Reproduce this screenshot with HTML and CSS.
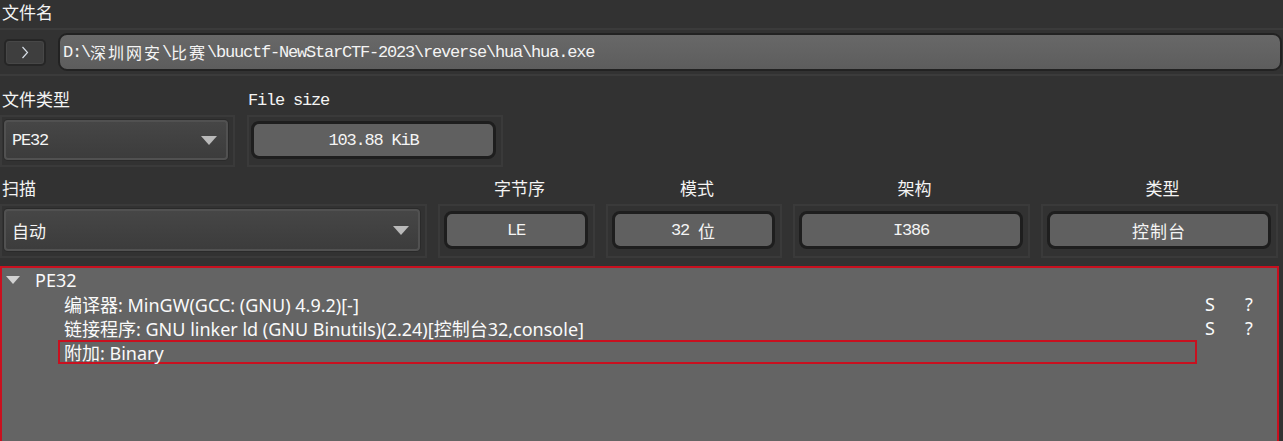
FILE: index.html
```html
<!DOCTYPE html>
<html lang="zh-CN">
<head>
<meta charset="utf-8">
<title>Detect It Easy</title>
<link rel="stylesheet" href="styles.css">
</head>
<body>
<div class="app">
  <div class="lbl top">文件名</div>
  <div class="pathrow">
    <div class="go"><svg width="8" height="13" viewBox="0 0 8 13"><polyline points="1.5,1 6.5,6.5 1.5,12" fill="none" stroke="#d6dde6" stroke-width="1.2"/></svg></div>
    <div class="path">D:\<span class="cj">深圳网安</span>\<span class="cj">比赛</span>\buuctf-NewStarCTF-2023\reverse\hua\hua.exe</div>
  </div>

  <div class="row2">
    <div class="col c-type">
      <div class="lbl">文件类型</div>
      <div class="frame f2"><div class="combo"><span>PE32</span><i class="arrow"></i></div></div>
    </div>
    <div class="col c-size">
      <div class="lbl mono">File size</div>
      <div class="frame f2"><div class="btn">103.88 KiB</div></div>
    </div>
  </div>

  <div class="row3">
    <div class="col">
      <div class="lbl">扫描</div>
      <div class="frame f3"><div class="combo"><span class="cj">自动</span><i class="arrow"></i></div></div>
    </div>
    <div class="col">
      <div class="lbl ctr">字节序</div>
      <div class="frame f3"><div class="btn">LE</div></div>
    </div>
    <div class="col">
      <div class="lbl ctr">模式</div>
      <div class="frame f3"><div class="btn">32 <span class="cj">位</span></div></div>
    </div>
    <div class="col">
      <div class="lbl ctr">架构</div>
      <div class="frame f3"><div class="btn">I386</div></div>
    </div>
    <div class="col">
      <div class="lbl ctr">类型</div>
      <div class="frame f3"><div class="btn"><span class="cj">控制台</span></div></div>
    </div>
  </div>

  <div class="tree">
    <div class="node"><i class="tw"></i><span class="root">PE32</span></div>
    <div class="leaf"><div class="name">编译器: MinGW(GCC: (GNU) 4.9.2)[-]</div><div class="s">S</div><div class="q">?</div></div>
    <div class="leaf"><div class="name">链接程序: GNU linker ld (GNU Binutils)(2.24)[控制台32,console]</div><div class="s">S</div><div class="q">?</div></div>
    <div class="leaf sel"><div class="name">附加: Binary</div><div class="s"></div><div class="q"></div></div>
  </div>
</div>
</body>
</html>
```

FILE: styles.css
```css
html, body {
  margin: 0;
  padding: 0;
}

body {
  background: #323232;
  width: 1283px;
  height: 441px;
  overflow: hidden;
  color: #f4f4f4;
  font-family: "Liberation Mono", "Noto Sans CJK SC", monospace;
}

.app {
  display: flex;
  flex-direction: column;
}

.lbl {
  height: 22px;
  line-height: 22px;
  font-size: 17px;
  font-family: "Noto Sans CJK SC", sans-serif;
  padding-left: 2px;
  margin-bottom: 5px;
  white-space: nowrap;
}

.lbl.top {
  height: 28px;
  line-height: 24px;
  margin-bottom: 0;
}

.lbl.mono {
  font-family: "Liberation Mono", monospace;
  font-size: 17px;
  letter-spacing: -1.2px;
  padding-left: 1px;
  line-height: 25px;
}

.lbl.ctr {
  text-align: center;
  padding-left: 6px;
}

.cj {
  font-family: "Noto Sans CJK SC", sans-serif;
  letter-spacing: 1px;
}

/* path row */
.pathrow {
  display: flex;
  align-items: center;
  gap: 12px;
  height: 44px;
  border-top: 2px solid #3b3b3b;
  border-bottom: 2px solid #3b3b3b;
  padding-left: 4px;
}

.go {
  width: 42px;
  height: 27px;
  box-sizing: border-box;
  border: 2px solid #262626;
  border-radius: 5px;
  background: #3e3e3e;
  box-shadow: inset 0 0 0 1px #474747;
  display: flex;
  align-items: center;
  justify-content: center;
}

.path {
  flex: 1;
  height: 38px;
  box-sizing: border-box;
  margin-right: 1px;
  border: 2px solid #222;
  border-radius: 9px;
  background: linear-gradient(#686868, #5d5d5d);
  display: flex;
  align-items: center;
  padding-left: 3px;
  font-size: 17px;
  letter-spacing: -1.2px;
  white-space: nowrap;
}

.path .cj {
  font-size: 16px;
  letter-spacing: 2px;
}

/* row 2 */
.row2 {
  display: flex;
  gap: 12px;
  padding-top: 12px;
  padding-bottom: 3px;
}

.c-type { width: 235px; }
.c-size { width: 256px; }

.col {
  display: flex;
  flex-direction: column;
}

.frame {
  box-sizing: border-box;
  border: 2px solid #3a3a3a;
  padding: 3px 5px 5px 2px;
  display: flex;
}

.f2 { height: 52px; }
.f3 { height: 54px; }

.combo {
  flex: 1;
  box-sizing: border-box;
  border: 2px solid #515151;
  border-radius: 4px;
  box-shadow: 0 0 0 1px #2a2a2a;
  background: linear-gradient(#464646, #3c3c3c);
  display: flex;
  align-items: center;
  padding-left: 6px;
  font-size: 17px;
  letter-spacing: -1.2px;
}

.combo .cj {
  font-size: 17px;
  letter-spacing: 0;
}

.arrow {
  margin-left: auto;
  margin-right: 9px;
  width: 0;
  height: 0;
  border-left: 8px solid transparent;
  border-right: 8px solid transparent;
  border-top: 9px solid #b9b9b9;
}

.btn {
  flex: 1;
  box-sizing: border-box;
  margin: 1px 0 1px 0;
  border: 3px solid #1e1e1e;
  border-radius: 8px;
  background: #606060;
  display: flex;
  align-items: center;
  justify-content: center;
  font-size: 17px;
  letter-spacing: -1.2px;
  white-space: pre;
}

.btn .cj {
  letter-spacing: 1px;
}

/* row 3 */
.row3 {
  display: grid;
  grid-template-columns: 427px 157px 176px 237px 237px;
  column-gap: 11px;
  padding-top: 7px;
  padding-bottom: 8px;
}

.row3 .btn {
  margin: 2px 0 2px 2px;
}

/* tree */
.tree {
  box-sizing: border-box;
  width: 1279px;
  height: 175px;
  border: 2px solid #c8101f;
  border-bottom: 0;
  background: #646464;
  font-family: "Noto Sans", "Noto Sans CJK SC", sans-serif;
  font-size: 18px;
  color: #fafafa;
}

.node {
  display: flex;
  align-items: center;
  height: 24px;
}

.tw {
  margin-left: 4px;
  width: 0;
  height: 0;
  border-left: 7px solid transparent;
  border-right: 7px solid transparent;
  border-top: 8px solid #d2d2d2;
}

.root {
  margin-left: 15px;
}

.leaf {
  display: flex;
  height: 24px;
}

.leaf .name {
  box-sizing: border-box;
  margin-left: 56px;
  width: 1139px;
  border: 2px solid transparent;
  padding-left: 4px;
  display: flex;
  align-items: center;
  white-space: nowrap;
}

.leaf.sel .name {
  border-color: #c8101f;
}

.leaf .s,
.leaf .q {
  width: 40px;
  box-sizing: border-box;
  padding-left: 8px;
  display: flex;
  align-items: center;
}
```
